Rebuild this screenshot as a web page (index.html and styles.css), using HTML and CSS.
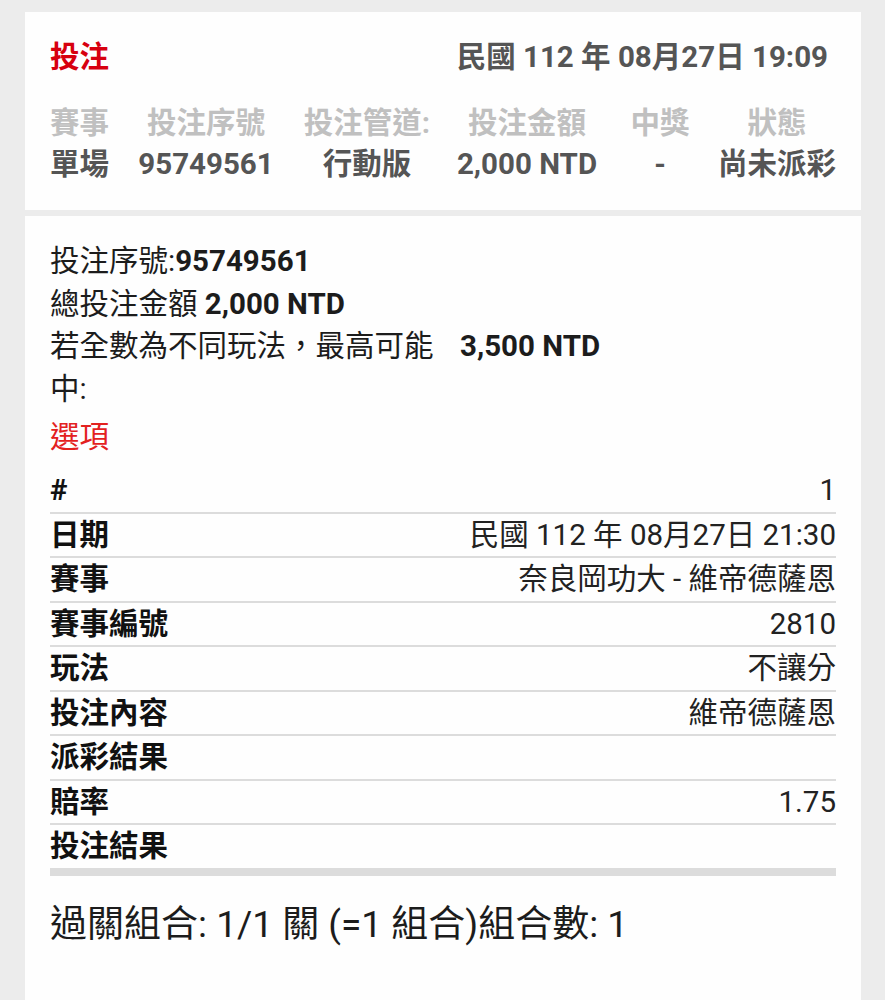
FILE: index.html
```html
<!DOCTYPE html>
<html lang="zh-Hant">
<head>
<meta charset="utf-8">
<title>投注</title>
<link rel="stylesheet" href="styles.css">
</head>
<body>
<div class="page">
  <section class="card summary">
    <div class="summary-head">
      <span class="title">投注</span>
      <span class="stamp">民國 112 年 08月27日 19:09</span>
    </div>
    <div class="summary-grid">
      <span class="lbl c1">賽事</span>
      <span class="lbl c2">投注序號</span>
      <span class="lbl c3">投注管道:</span>
      <span class="lbl c4">投注金額</span>
      <span class="lbl c5">中獎</span>
      <span class="lbl c6">狀態</span>
      <span class="val c1">單場</span>
      <span class="val c2">95749561</span>
      <span class="val c3">行動版</span>
      <span class="val c4">2,000 NTD</span>
      <span class="val c5">-</span>
      <span class="val c6">尚未派彩</span>
    </div>
  </section>

  <section class="card detail">
    <div class="info">投注序號:<b>95749561</b></div>
    <div class="info">總投注金額 <b>2,000 NTD</b></div>
    <div class="info split">
      <span class="info-label">若全數為不同玩法，最高可能中:</span>
      <b class="info-value">3,500 NTD</b>
    </div>
    <h2 class="section-title">選項</h2>
    <div class="options">
      <div class="opt-row"><span class="opt-key">#</span><span class="opt-val">1</span></div>
      <div class="opt-row"><span class="opt-key">日期</span><span class="opt-val">民國 112 年 08月27日 21:30</span></div>
      <div class="opt-row"><span class="opt-key">賽事</span><span class="opt-val">奈良岡功大 - 維帝德薩恩</span></div>
      <div class="opt-row"><span class="opt-key">賽事編號</span><span class="opt-val">2810</span></div>
      <div class="opt-row"><span class="opt-key">玩法</span><span class="opt-val">不讓分</span></div>
      <div class="opt-row"><span class="opt-key">投注內容</span><span class="opt-val">維帝德薩恩</span></div>
      <div class="opt-row"><span class="opt-key">派彩結果</span><span class="opt-val"></span></div>
      <div class="opt-row"><span class="opt-key">賠率</span><span class="opt-val">1.75</span></div>
      <div class="opt-row last"><span class="opt-key">投注結果</span><span class="opt-val"></span></div>
    </div>
    <p class="combo">過關組合: 1/1 關 (=1 組合)組合數: 1</p>
  </section>
</div>
</body>
</html>
```

FILE: styles.css
```css
* {
  box-sizing: border-box;
}

html, body {
  margin: 0;
  padding: 0;
}

body {
  background: #ececec;
  font-family: Roboto, "Noto Sans CJK TC", "Noto Sans", sans-serif;
  font-size: 29.5px;
  color: #1c1c1c;
}

.page {
  display: flex;
  flex-direction: column;
  gap: 6px;
  padding: 12px 24px 0 25px;
}

.card {
  background: #fefefe;
}

/* ---------- summary card ---------- */
.summary {
  padding: 25px 25px 25px 25px;
}

.summary-head {
  display: flex;
  justify-content: space-between;
  align-items: baseline;
  line-height: 40px;
  margin-bottom: 26px;
  font-weight: 700;
}

.title {
  color: #d7000f;
}

.stamp {
  color: #555555;
  margin-right: 8px;
}

.summary-grid {
  display: grid;
  grid-template-columns: 60px 192px 130px 190px 76px 138px;
  grid-auto-rows: 41px;
  line-height: 41px;
  font-weight: 700;
  text-align: center;
  white-space: nowrap;
}

.summary-grid .c1 {
  text-align: left;
}

.summary-grid .c6 {
  padding-left: 20px;
}

.lbl {
  color: #c0c0c0;
}

.val {
  color: #555555;
}

/* ---------- detail card ---------- */
.detail {
  padding: 24px 25px 60px 25px;
  line-height: 42.5px;
}

.info b {
  font-weight: 700;
}

.split {
  display: flex;
  align-items: flex-start;
}

.info-label {
  width: 395px;
  flex: none;
}

.info-value {
  margin-left: 15px;
}

.section-title {
  margin: 6px 0 0 0;
  font-size: 29.5px;
  font-weight: 400;
  line-height: 42.5px;
  color: #e3211f;
}

.options {
  margin-top: 10.5px;
}

.opt-row {
  display: flex;
  justify-content: space-between;
  align-items: center;
  height: 44.5px;
  line-height: 42.5px;
  border-bottom: 2px solid #dcdcdc;
}

.opt-row.last {
  height: 50.5px;
  border-bottom: 8px solid #dcdcdc;
}

.opt-key {
  font-weight: 700;
  color: #111;
}

.opt-val {
  color: #222;
}

.combo {
  margin: 24.5px 0 0 0;
  font-size: 37px;
  line-height: 50px;
  color: #1c1c1c;
}
```
